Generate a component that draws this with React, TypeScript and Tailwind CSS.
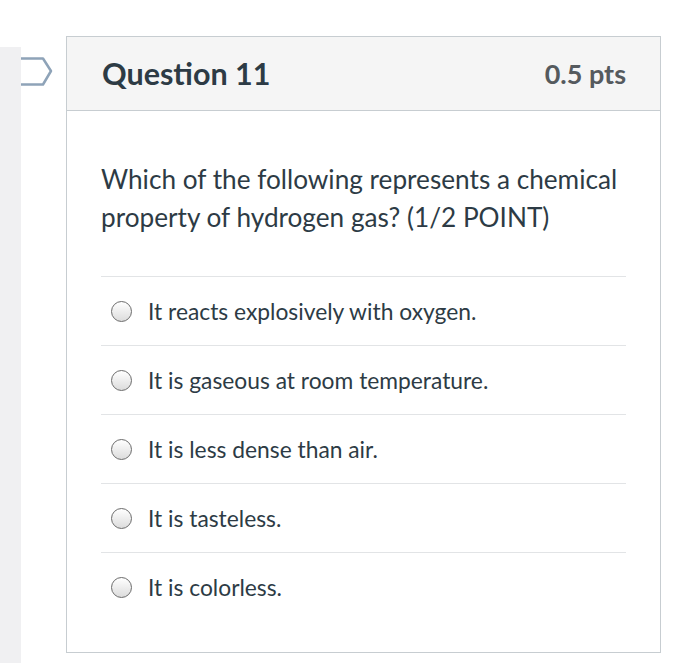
import React from 'react';

const answers = [
  'It reacts explosively with oxygen.',
  'It is gaseous at room temperature.',
  'It is less dense than air.',
  'It is tasteless.',
  'It is colorless.',
];

const Radio: React.FC = () => (
  <span className="inline-block w-[21px] h-[21px] rounded-full border-[1.5px] border-[#6b6b6b] bg-gradient-to-b from-[#ffffff] to-[#dcdcdc] shrink-0" />
);

const App: React.FC = () => {
  return (
    <div className="relative w-[700px] h-[663px] bg-white overflow-hidden font-['Lato',sans-serif]">
      {/* sidebar strip */}
      <div className="absolute left-0 top-[47px] w-[21px] h-[616px] bg-[#f0f0f2]" />
      {/* flag marker */}
      <svg className="absolute left-[21px] top-[57px]" width="34" height="30" viewBox="0 0 34 30">
        <path d="M0 1.5 H22 L30 14 L22 27.5 H0" fill="none" stroke="#8ea3b8" strokeWidth="2.5" strokeLinejoin="round" />
      </svg>

      <div className="pt-[36px] pl-[66px] w-[661px]">
        <div className="border border-[#c7cdd1]">
          <div className="h-[74px] bg-[#f5f5f5] border-b border-[#c7cdd1] flex items-center justify-between pl-[35px] pr-[34px]">
            <h2 className="text-[30.5px] font-bold text-[#2d3b45] leading-none">Question 11</h2>
            <span className="text-[27px] font-bold text-[#555a5e] leading-none">0.5 pts</span>
          </div>
          <div className="px-[34px] pt-[49px] pb-[31px] text-[#2d3b45]">
            <p className="text-[26.2px] leading-[38px] mb-[40px] mr-[-20px]">
              Which of the following represents a chemical property of hydrogen gas? (1/2 POINT)
            </p>
            <div>
              {answers.map((a) => (
                <div key={a} className="border-t border-[#e2e4e6] h-[69px] flex items-center gap-[16px] pl-[10px]">
                  <Radio />
                  <span className="text-[22.8px] text-[#2d3b45]">{a}</span>
                </div>
              ))}
            </div>
          </div>
        </div>
      </div>
    </div>
  );
};

export default App;
